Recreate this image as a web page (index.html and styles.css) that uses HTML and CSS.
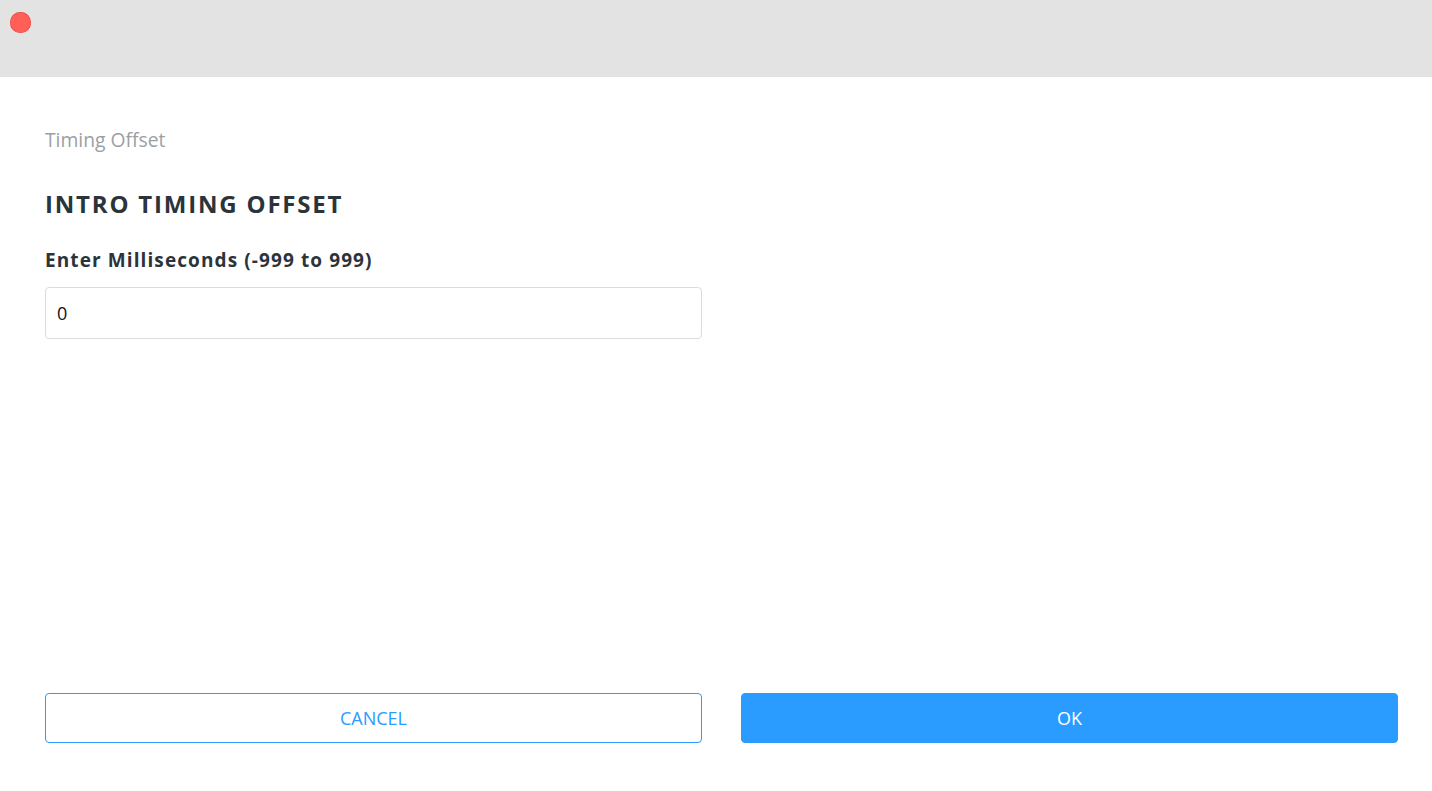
FILE: index.html
```html
<!DOCTYPE html>
<html>
<head>
<meta charset="utf-8">
<link rel="stylesheet" href="styles.css">
</head>
<body>
<div class="window">
  <div class="titlebar">
    <span class="close-dot"></span>
  </div>
  <div class="content">
    <div class="crumb">Timing Offset</div>
    <h1 class="title">INTRO TIMING OFFSET</h1>
    <label class="label" for="ms">Enter Milliseconds (-999 to 999)</label>
    <div class="grid">
      <input id="ms" class="field" type="text" value="0">
    </div>
    <div class="spacer"></div>
    <div class="grid actions">
      <button class="btn btn-outline">CANCEL</button>
      <button class="btn btn-primary">OK</button>
    </div>
  </div>
</div>
</body>
</html>
```

FILE: styles.css
```css
html, body {
  margin: 0;
  padding: 0;
  background: #ffffff;
  font-family: "Open Sans", "Noto Sans", sans-serif;
}
.window {
  width: 1432px;
  height: 791px;
  display: flex;
  flex-direction: column;
}
.titlebar {
  height: 77px;
  background: #e3e3e3;
  display: flex;
  align-items: flex-start;
  padding: 12px 0 0 10px;
  box-sizing: border-box;
}
.close-dot {
  width: 21px;
  height: 21px;
  border-radius: 50%;
  background: #ff5f57;
  box-shadow: inset 0 0 0 0.5px #e2463f;
}
.content {
  flex: 1;
  display: flex;
  flex-direction: column;
  padding: 50px 34px 48px 45px;
}
.crumb {
  font-size: 19.3px;
  line-height: 26px;
  color: #9b9fa4;
}
.title {
  margin: 36px 0 0 0;
  font-size: 24px;
  line-height: 30px;
  font-weight: 700;
  letter-spacing: 1.8px;
  color: #2b333b;
}
.label {
  margin-top: 28px;
  font-size: 19px;
  line-height: 26px;
  font-weight: 700;
  letter-spacing: 1.1px;
  color: #2b333b;
}
.grid {
  display: grid;
  grid-template-columns: 1fr 1fr;
  column-gap: 39px;
}
.field {
  margin-top: 14px;
  height: 52px;
  box-sizing: border-box;
  border: 1px solid #dcdcdc;
  border-radius: 4px;
  padding: 0 11px;
  font-family: "Open Sans", "Noto Sans", sans-serif;
  font-size: 18px;
  color: #111111;
  outline: none;
}
.spacer {
  flex: 1;
}
.btn {
  height: 50px;
  border-radius: 4px;
  font-family: "Open Sans", "Noto Sans", sans-serif;
  font-size: 18px;
  cursor: pointer;
  box-sizing: border-box;
}
.btn-outline {
  background: #ffffff;
  border: 1px solid #2a9bff;
  color: #2a9bff;
}
.btn-primary {
  background: #2a9bff;
  border: 1px solid #2a9bff;
  color: #ffffff;
}
```
